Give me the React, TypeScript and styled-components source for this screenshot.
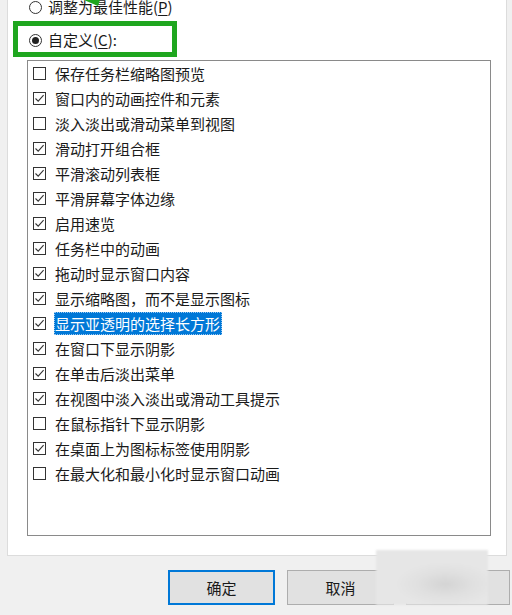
import React from "react";
import styled, { createGlobalStyle } from "styled-components";

const GlobalStyle = createGlobalStyle`
  html, body {
    margin: 0;
    padding: 0;
    background: #f0f0f0;
  }
  body {
    font-family: "Noto Sans CJK SC", "Noto Sans", sans-serif;
  }
`;

const items: { label: string; checked: boolean; selected?: boolean }[] = [
  { label: "保存任务栏缩略图预览", checked: false },
  { label: "窗口内的动画控件和元素", checked: true },
  { label: "淡入淡出或滑动菜单到视图", checked: false },
  { label: "滑动打开组合框", checked: true },
  { label: "平滑滚动列表框", checked: true },
  { label: "平滑屏幕字体边缘", checked: true },
  { label: "启用速览", checked: true },
  { label: "任务栏中的动画", checked: true },
  { label: "拖动时显示窗口内容", checked: true },
  { label: "显示缩略图，而不是显示图标", checked: true },
  { label: "显示亚透明的选择长方形", checked: true, selected: true },
  { label: "在窗口下显示阴影", checked: true },
  { label: "在单击后淡出菜单", checked: true },
  { label: "在视图中淡入淡出或滑动工具提示", checked: true },
  { label: "在鼠标指针下显示阴影", checked: false },
  { label: "在桌面上为图标标签使用阴影", checked: true },
  { label: "在最大化和最小化时显示窗口动画", checked: false },
];

const Window = styled.div`
  position: relative;
  width: 512px;
  height: 615px;
  overflow: hidden;
  background: #f0f0f0;
  color: #1a1a1a;
`;

const Panel = styled.div`
  margin-left: 7px;
  width: 500px;
  height: 556px;
  box-sizing: border-box;
  background: #ffffff;
  border: 1px solid #dcdcdc;
  border-top: none;
  padding-left: 19px;
  display: flex;
  flex-direction: column;
`;

const OptionRow = styled.div<{ $top: number; $height: number }>`
  margin-top: ${({ $top }) => $top}px;
  height: ${({ $height }) => $height}px;
  padding-left: 2px;
  display: flex;
  align-items: center;
  gap: 6px;
  font-size: 15px;
  line-height: 20px;
`;

const Radio = styled.span<{ $on?: boolean }>`
  width: 13px;
  height: 13px;
  box-sizing: border-box;
  border: 1px solid #333;
  border-radius: 50%;
  background: #fff;
  display: flex;
  align-items: center;
  justify-content: center;
  flex: none;
  &::after {
    content: "";
    width: 7px;
    height: 7px;
    border-radius: 50%;
    background: ${({ $on }) => ($on ? "#222" : "transparent")};
  }
`;

const Key = styled.span`
  text-decoration: underline;
  text-underline-offset: 2px;
`;

const ListBox = styled.div`
  margin-top: 10px;
  width: 464px;
  height: 476px;
  box-sizing: border-box;
  border: 1px solid #8a8a8a;
  display: flex;
  flex-direction: column;
`;

const Row = styled.div`
  height: 25px;
  padding-left: 5px;
  display: flex;
  align-items: center;
  gap: 8px;
  font-size: 15px;
`;

const Box = styled.span`
  width: 13px;
  height: 13px;
  box-sizing: border-box;
  border: 1px solid #333;
  background: #fff;
  flex: none;
  display: flex;
  svg {
    display: block;
  }
`;

const Label = styled.span<{ $selected?: boolean }>`
  line-height: 21px;
  padding: 0 1px 0 0;
  border: 1px dotted ${({ $selected }) => ($selected ? "#9bc8f0" : "transparent")};
  background: ${({ $selected }) => ($selected ? "#0078d7" : "transparent")};
  color: ${({ $selected }) => ($selected ? "#ffffff" : "#1a1a1a")};
  white-space: nowrap;
`;

const ButtonRow = styled.div`
  margin-top: 14px;
  padding-left: 168px;
  display: flex;
  gap: 12px;
`;

const Button = styled.button<{ $default?: boolean; $width?: number }>`
  width: ${({ $width }) => $width ?? 107}px;
  height: 35px;
  box-sizing: border-box;
  background: #e1e1e1;
  border: ${({ $default }) => ($default ? "2px solid #0078d7" : "1px solid #adadad")};
  font-family: "Noto Sans CJK SC", "Noto Sans", sans-serif;
  font-size: 15px;
  color: #1a1a1a;
  padding: 0;
`;

const Highlight = styled.div`
  position: absolute;
  left: 13px;
  top: 21px;
  width: 164px;
  height: 36px;
  box-sizing: border-box;
  border: 5px solid #1fa61f;
  pointer-events: none;
`;

const ArrowTip = styled.svg`
  position: absolute;
  left: 84px;
  top: 0;
`;

const Smudge = styled.div`
  position: absolute;
  left: 376px;
  top: 550px;
  width: 112px;
  height: 55px;
  background: radial-gradient(
    ellipse 45% 40% at 62% 62%,
    #d4d4d4 0%,
    #e0e0e0 55%,
    #e6e6e6 100%
  );
  filter: blur(1px);
`;

const Check = () => (
  <svg width="11" height="11" viewBox="0 0 11 11">
    <path d="M1.5 5.5 L4.2 8.2 L9.6 2.2" fill="none" stroke="#333" strokeWidth="1.1" />
  </svg>
);

export default function App() {
  return (
    <Window>
      <GlobalStyle />
      <Panel>
        <OptionRow $top={0} $height={14}>
          <Radio />
          <span>
            调整为最佳性能(<Key>P</Key>)
          </span>
        </OptionRow>
        <OptionRow $top={16} $height={20}>
          <Radio $on />
          <span>
            自定义(<Key>C</Key>):
          </span>
        </OptionRow>
        <ListBox>
          {items.map((it) => (
            <Row key={it.label}>
              <Box>{it.checked && <Check />}</Box>
              <Label $selected={it.selected}>{it.label}</Label>
            </Row>
          ))}
        </ListBox>
      </Panel>
      <ButtonRow>
        <Button $default>确定</Button>
        <Button>取消</Button>
        <Button $width={104}>应用(A)</Button>
      </ButtonRow>
      <Highlight />
      <ArrowTip width="18" height="7" viewBox="0 0 18 7">
        <polygon points="0,0 16,0 14,6" fill="#1fa61f" />
      </ArrowTip>
      <Smudge />
    </Window>
  );
}
